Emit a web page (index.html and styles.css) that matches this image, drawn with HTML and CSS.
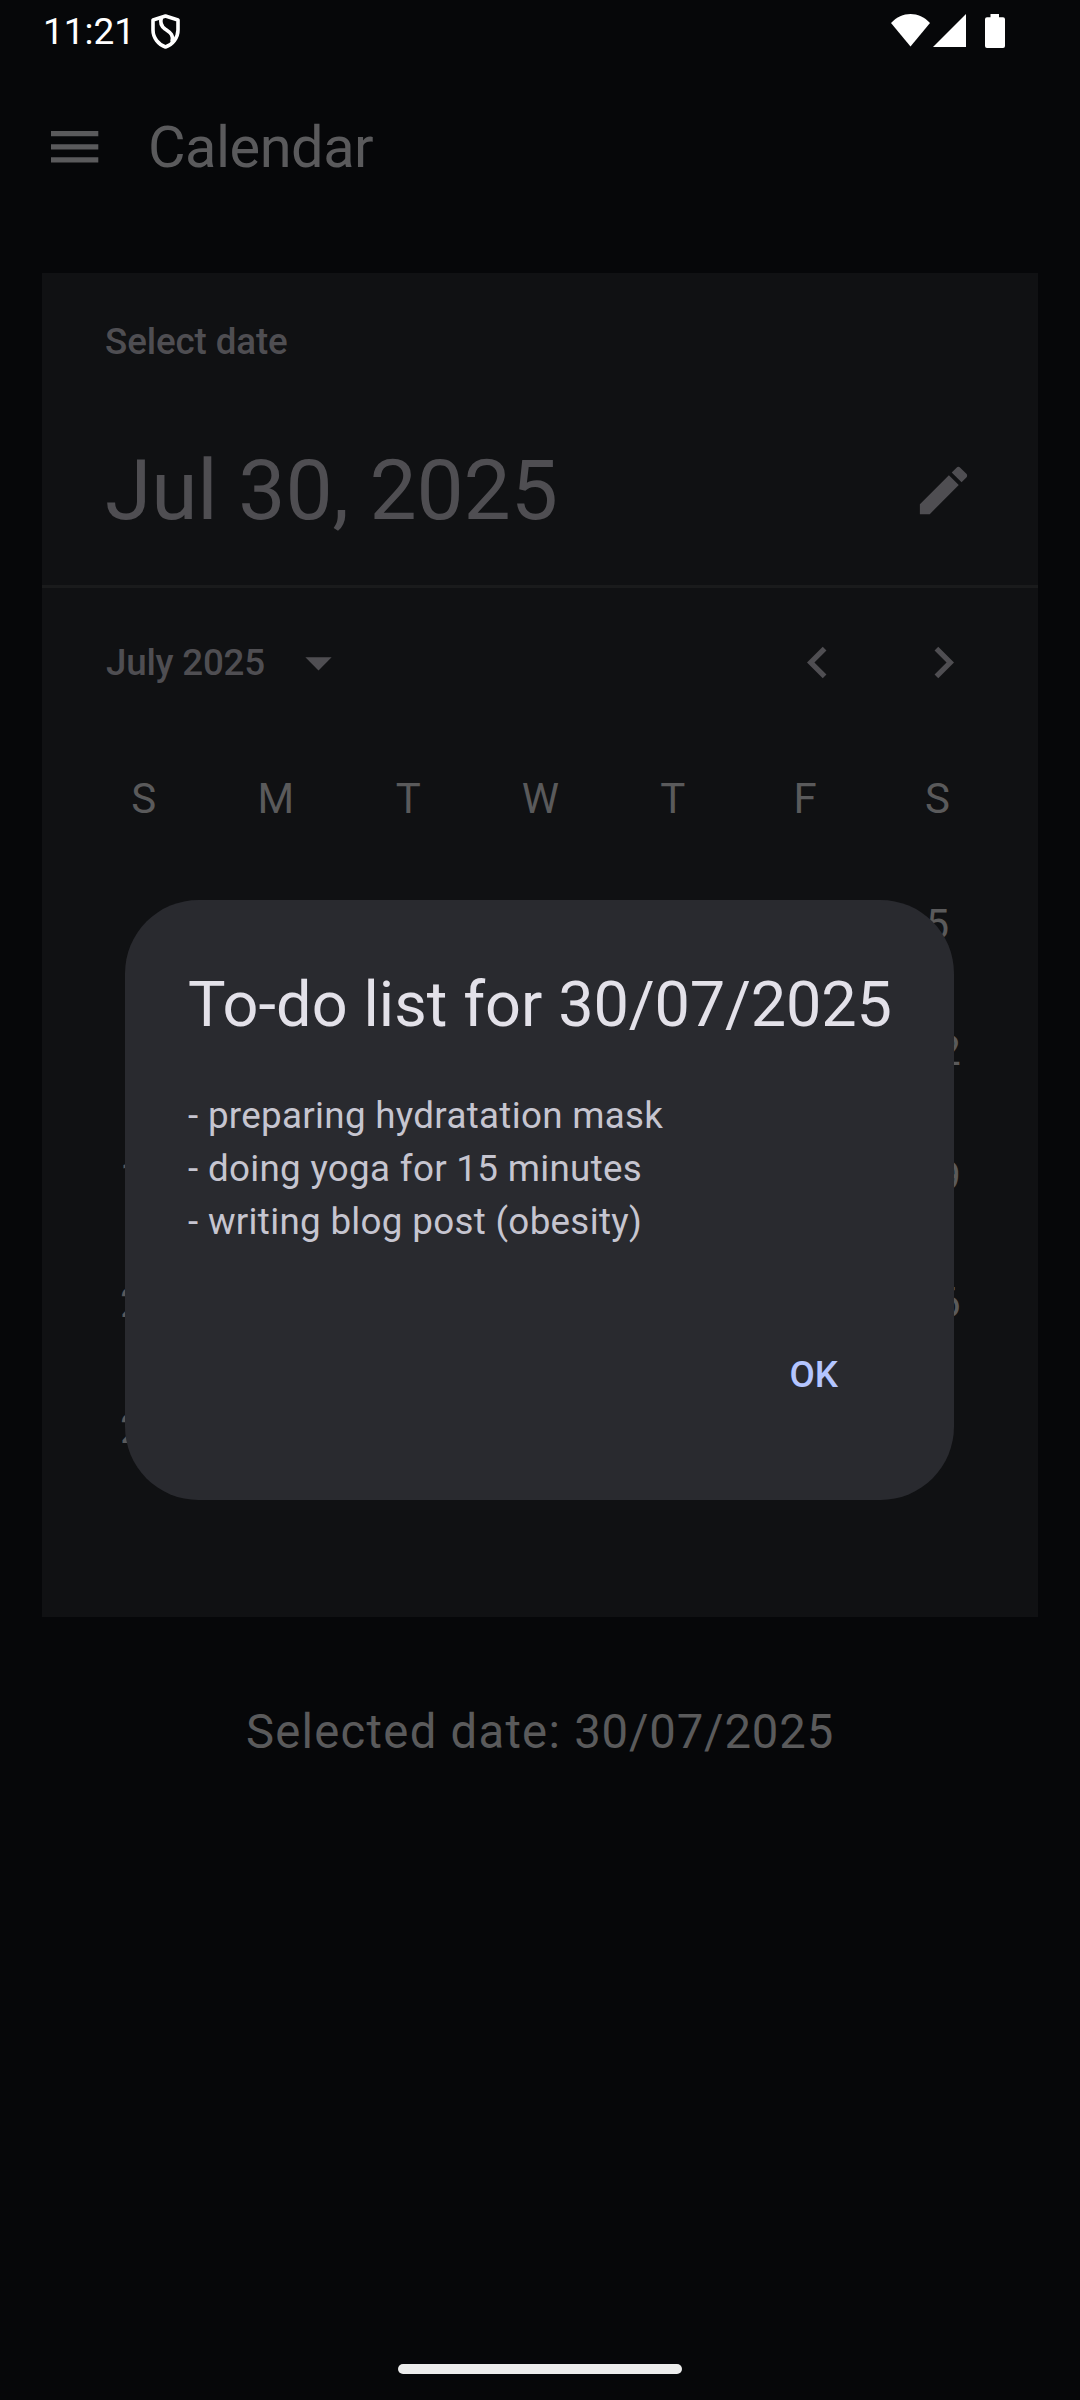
FILE: index.html
```html
<!DOCTYPE html>
<html lang="en">
<head>
<meta charset="utf-8">
<title>Calendar</title>
<link rel="stylesheet" href="styles.css">
</head>
<body>
<div class="screen">
  <header class="status-bar">
    <span class="clock">11:21</span>
    <svg class="shield" width="32" height="37" viewBox="0 0 32 37" fill="none" stroke="#fff" stroke-width="3.600" stroke-linejoin="round"><path d="M15.500 3 L28 7 V17 C28 25 22.500 31.500 15.500 34 C8.500 31.500 3 25 3 17 V7 Z"/><path d="M11.500 4.500 C10 9 11 13 15 16 C20 19.500 24 21.500 22 29"/></svg>
    <div class="status-icons">
      <svg width="39" height="33" viewBox="0 0 39 33" fill="#fff"><path d="M0 9 C11 -3 28 -3 39 9 L19.500 32.500 Z"/></svg>
      <svg class="signal" width="33" height="33" viewBox="0 0 33 33" fill="#fff"><path d="M0 33 L33 0 V33 Z"/></svg>
      <svg class="battery" width="20" height="34" viewBox="0 0 20 34" fill="#fff"><path d="M5.500 0 H14 V3.300 H18 Q20 3.300 20 5.300 V32 Q20 34 18 34 H2 Q0 34 0 32 V5.300 Q0 3.300 2 3.300 H5.500 Z"/></svg>
    </div>
  </header>
  <nav class="app-bar">
    <svg width="48" height="32" viewBox="0 0 48 32" fill="#5a5a5c"><path d="M0 0h47.300v5.200H0zM0 13.200h47.300v5.200H0zM0 26.300h47.300v5.200H0z"/></svg>
    <h1 class="app-title">Calendar</h1>
  </nav>
  <main class="picker">
    <section class="picker-head">
      <p class="label">Select date</p>
      <div class="headline-row">
        <h2 class="headline">Jul 30, 2025</h2>
        <svg width="63" height="63" viewBox="0 0 24 24" fill="#4f4e52"><path d="M3 17.250V21h3.750L17.810 9.940l-3.750-3.750L3 17.250zM20.710 7.040c.39-.39.39-1.020 0-1.410l-2.340-2.340c-.39-.39-1.020-.39-1.410 0l-1.830 1.830 3.750 3.750 1.830-1.830z"/></svg>
      </div>
    </section>
    <section class="month-bar">
      <span class="label month">July 2025</span>
      <svg class="caret" width="63" height="63" viewBox="0 0 24 24" fill="#4f4e52"><path d="M7 10l5 5 5-5z"/></svg>
      <svg class="prev" width="63" height="63" viewBox="0 0 24 24" fill="#4f4e52"><path d="M15.410 7.410L14 6l-6 6 6 6 1.410-1.410L10.830 12z"/></svg>
      <svg class="next" width="63" height="63" viewBox="0 0 24 24" fill="#4f4e52"><path d="M10 6L8.590 7.410 13.170 12l-4.580 4.590L10 18l6-6z"/></svg>
    </section>
    <section class="days">
      <span>S</span><span>M</span><span>T</span><span>W</span><span>T</span><span>F</span><span>S</span>
      <span></span><span></span><span>1</span><span>2</span><span>3</span><span>4</span><span>5</span>
      <span>6</span><span>7</span><span>8</span><span>9</span><span>10</span><span>11</span><span>12</span>
      <span>13</span><span>14</span><span>15</span><span>16</span><span>17</span><span>18</span><span>19</span>
      <span>20</span><span>21</span><span>22</span><span>23</span><span>24</span><span>25</span><span>26</span>
      <span>27</span><span>28</span><span>29</span><span>30</span><span>31</span>
    </section>
  </main>
  <p class="selected">Selected date: <span class="selected-value">30/07/2025</span></p>
  <div class="home-handle"></div>
  <div class="dialog" role="dialog">
    <h2 class="dialog-title">To-do list for <span class="dialog-date">30/07/2025</span></h2>
    <p class="dialog-body">- preparing hydratation mask<br>- doing yoga for 15 minutes<br>- writing blog post (obesity)</p>
    <button class="ok">OK</button>
  </div>
</div>
</body>
</html>
```
FILE: styles.css
```css
* { box-sizing: border-box; margin: 0; padding: 0; }
body { background: #060709; font-family: Roboto, sans-serif; }
svg { display: block; flex: none; }
h1, h2 { font-weight: 400; white-space: nowrap; }

.screen { position: relative; width: 1080px; height: 2400px; overflow: hidden; display: flex; flex-direction: column; }

.status-bar { display: flex; height: 63px; padding: 13px 75px 0 43px; flex: none; }
.clock { width: 107px; font-size: 37px; line-height: 37px; color: #fff; }
.status-icons { display: flex; margin-left: auto; padding-top: 1px; }
.signal { margin-left: 3px; }
.battery { margin-left: 19px; }

.app-bar { display: flex; align-items: center; height: 168px; padding-left: 51px; gap: 49px; flex: none; }
.app-title { font-size: 57.75px; line-height: 74px; letter-spacing: -0.5px; color: #5a5a5c; }

.picker { width: 996px; height: 1344px; margin: 42px 0 0 42px; background: #101113; flex: none; }
.picker-head { height: 315px; padding: 43px 63px 0; border-bottom: 3px solid #1a1b1c; }
.label { font-size: 36.75px; font-weight: 500; letter-spacing: -0.12px; line-height: 52px; color: #4f4e52; }
.headline-row { display: flex; align-items: center; justify-content: space-between; margin-top: 70px; }
.headline { font-size: 84px; line-height: 105px; letter-spacing: -0.15px; color: #4f4e52; }

.month-bar { display: flex; align-items: center; height: 147px; padding: 2px 63px 0; }
.month { width: 160px; padding-left: 1px; letter-spacing: -0.22px; white-space: nowrap; }
.caret { margin-left: 22px; }
.prev { margin-left: auto; }
.next { margin-left: 63px; }

.days { display: grid; grid-template-columns: repeat(7, 132.300px); grid-auto-rows: 126px; justify-content: center; padding: 1px 0 0 1px; line-height: 126px; text-align: center; font-size: 42px; color: #5a5a5b; }

.selected { margin-top: 84px; text-align: center; font-size: 47.25px; line-height: 63px; letter-spacing: 1.26px; color: #5a5a5b; }
.selected-value { letter-spacing: 0.85px; }

.home-handle { width: 284px; height: 10px; margin: auto auto 26px 398px; border-radius: 5px; background: #ececec; flex: none; }

.dialog { position: absolute; left: 125px; top: 900px; width: 829px; height: 600px; padding: 63px; display: flex; flex-direction: column; border-radius: 73.500px; background: #292a2f; }
.dialog-title { font-size: 63px; line-height: 84px; letter-spacing: 0.07px; color: #e3e1e9; }
.dialog-date { letter-spacing: -0.18px; }
.dialog-body { margin-top: 42px; font-size: 36.75px; line-height: 53px; letter-spacing: 0.31px; color: #c6c5d0; }
.ok { align-self: flex-end; margin: 101px 53px 0 0; border: 0; background: none; font: 500 36.75px/52px Roboto, sans-serif; letter-spacing: 0; color: #b4c5ff; }
```
